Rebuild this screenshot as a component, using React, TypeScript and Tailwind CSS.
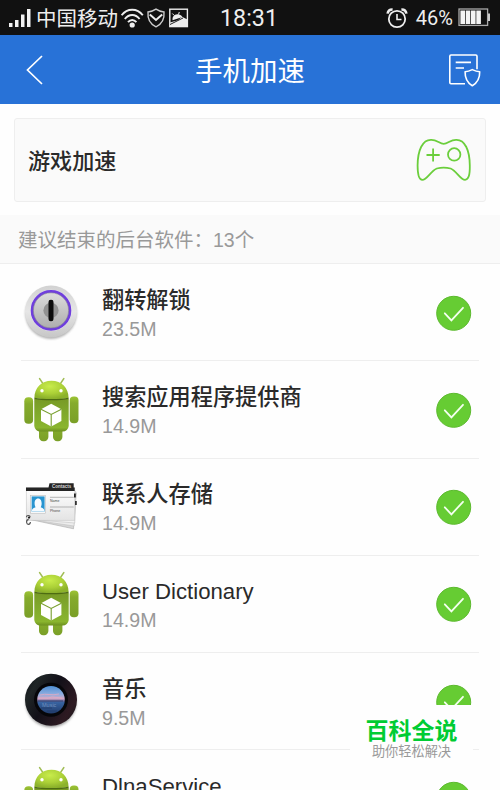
import React from 'react';

type IconName = 'lock' | 'android' | 'contacts' | 'music';

interface AppItem {
  name: string;
  size?: string;
  icon: IconName;
}

const apps: AppItem[] = [
  { name: '翻转解锁', size: '23.5M', icon: 'lock' },
  { name: '搜索应用程序提供商', size: '14.9M', icon: 'android' },
  { name: '联系人存储', size: '14.9M', icon: 'contacts' },
  { name: 'User Dictionary', size: '14.9M', icon: 'android' },
  { name: '音乐', size: '9.5M', icon: 'music' },
  { name: 'DlnaService', icon: 'android' },
];

const LockIcon = () => (
  <svg width="60" height="68" viewBox="0 0 60 68">
    <defs>
      <linearGradient id="lockRim" x1="0" y1="0" x2="0" y2="1">
        <stop offset="0" stopColor="#d2d2d2" />
        <stop offset="0.5" stopColor="#e6e6e6" />
        <stop offset="1" stopColor="#c6c6c6" />
      </linearGradient>
      <linearGradient id="lockFace" x1="0" y1="0" x2="0" y2="1">
        <stop offset="0" stopColor="#dedede" />
        <stop offset="1" stopColor="#acacac" />
      </linearGradient>
      <filter id="lockShadow" x="-20%" y="-20%" width="140%" height="140%">
        <feGaussianBlur stdDeviation="1" />
      </filter>
    </defs>
    <circle cx="29" cy="34.3" r="25.7" fill="#8a8a8a" opacity="0.65" filter="url(#lockShadow)" />
    <circle cx="29" cy="32.6" r="26" fill="url(#lockRim)" />
    <circle cx="29" cy="31.4" r="20.6" fill="#e9e4f5" />
    <circle cx="29" cy="31.4" r="19" fill="url(#lockFace)" stroke="#6f3fdc" strokeWidth="2.6" />
    <circle cx="29" cy="31.4" r="17.6" fill="none" stroke="#7c788a" strokeWidth="0.5" />
    <circle cx="29" cy="31.4" r="7.6" fill="#929292" />
    <rect x="26.5" y="20.7" width="5" height="21.6" rx="2.3" fill="#0c0c0c" />
  </svg>
);

const AndroidIcon = () => (
  <svg width="60" height="68" viewBox="0 0 60 68">
    <defs>
      <linearGradient id="droidBody" x1="0" y1="0" x2="0" y2="1">
        <stop offset="0" stopColor="#789a26" />
        <stop offset="0.4" stopColor="#7fa82b" />
        <stop offset="0.88" stopColor="#8ab52e" />
        <stop offset="1" stopColor="#6c8f20" />
      </linearGradient>
      <radialGradient id="droidHead" cx="0.45" cy="0.3" r="0.65">
        <stop offset="0" stopColor="#c8ec4b" />
        <stop offset="0.6" stopColor="#abd037" />
        <stop offset="1" stopColor="#8cb22b" />
      </radialGradient>
      <linearGradient id="droidLimb" x1="0" y1="0" x2="0" y2="1">
        <stop offset="0" stopColor="#9cc334" />
        <stop offset="0.25" stopColor="#85ab2c" />
        <stop offset="1" stopColor="#7a9f27" />
      </linearGradient>
    </defs>
    <path d="M17.6 2.6 20.8 7.4M41.8 2.6 38.6 7.4" stroke="#a0bd55" strokeWidth="1.6" strokeLinecap="round" />
    <rect x="17" y="48" width="9.4" height="17.2" rx="4.2" fill="url(#droidLimb)" />
    <rect x="31" y="48" width="9.4" height="17.2" rx="4.2" fill="url(#droidLimb)" />
    <rect x="2.3" y="21.3" width="8.8" height="26.4" rx="4" fill="url(#droidLimb)" />
    <rect x="47.7" y="20.6" width="8.8" height="26.6" rx="4" fill="url(#droidLimb)" />
    <path d="M12.3 23h34.4v27a6 6 0 0 1-6 5.5H18.3a6 6 0 0 1-6-5.5z" fill="url(#droidBody)" />
    <path d="M12.4 22C12.4 12 19.5 4.8 29.5 4.8S46.6 12 46.6 22c-8 1.7-26 1.7-34.2 0z" fill="url(#droidHead)" />
    <path d="M12.4 22.4c8 1.7 26 1.7 34.2 0" fill="none" stroke="#4d6b12" strokeWidth="1.2" />
    <circle cx="20" cy="14.8" r="1.7" fill="#fff" />
    <circle cx="39" cy="14.8" r="1.7" fill="#fff" />
    <path d="M29.2 27.7 39.4 33.3v11.6L29.2 50.4 19 44.9V33.3z" fill="#fff" />
    <path d="M19 33.3l10.2 5.2 10.2-5.2M29.2 38.5v11.9" fill="none" stroke="#789f2e" strokeWidth="1.1" />
  </svg>
);

const ContactsIcon = () => (
  <svg width="60" height="68" viewBox="0 0 60 68">
    <defs>
      <linearGradient id="cardFace" x1="0" y1="0" x2="0" y2="1">
        <stop offset="0" stopColor="#ffffff" />
        <stop offset="1" stopColor="#e4e4e4" />
      </linearGradient>
    </defs>
    <path d="M6 46 51.5 55.8 54.2 20 50 18z" fill="#d6d6d6" stroke="#aaa" strokeWidth="0.6" />
    <path d="M5 46 52 53 54 19z" fill="#ededed" stroke="#bbb" strokeWidth="0.5" />
    <path d="M4.5 46 52.8 50 53.6 18z" fill="#f3f3f3" stroke="#bbb" strokeWidth="0.5" />
    <rect x="4.2" y="15" width="48.6" height="32.2" fill="url(#cardFace)" stroke="#bcbcbc" strokeWidth="0.5" />
    <path d="M4 18v-3.5h22.5l1-4.2h24.2v4.2h1V18z" fill="#252525" />
    <rect x="52" y="20.5" width="1.8" height="4" fill="#222" />
    <rect x="53" y="28" width="1.8" height="4" fill="#333" />
    <text x="30" y="15.3" fontSize="4.5" fontWeight="bold" fill="#d8d8d8" fontFamily="Liberation Sans, sans-serif">
      Contacts
    </text>
    <rect x="8.6" y="22.4" width="15" height="17.8" fill="#fff" stroke="#b9b9b9" strokeWidth="0.6" />
    <rect x="9.6" y="23.4" width="13" height="15.2" fill="#2794d0" />
    <path d="M9.8 38.6c0-2.6 1.5-3.6 3.8-4.3-1.4-1.9-1.9-8.9 2.5-8.9s4 7 2.6 8.9c2.3.7 3.7 1.7 3.7 4.3z" fill="#f5fbff" />
    <path d="M28 24.3h23.8M28 34h23.8" stroke="#999" strokeWidth="0.7" />
    <text x="28" y="29.4" fontSize="3.5" fill="#444" fontFamily="Liberation Sans, sans-serif">
      Name
    </text>
    <text x="28" y="39" fontSize="3.5" fill="#444" fontFamily="Liberation Sans, sans-serif">
      Phone
    </text>
    <path d="M4.4 44.2c0-2.2 3.8-2.2 3.8 0M8.4 49c-.2 3.2-3.6 3-3.8.2-.1-1.6.8-2.6 2-2.8" fill="none" stroke="#4c4c4c" strokeWidth="1.1" />
    <circle cx="7" cy="44.6" r="1.1" fill="#222" />
  </svg>
);

const MusicIcon = () => (
  <svg width="60" height="68" viewBox="0 0 60 68">
    <defs>
      <linearGradient id="disc" x1="0" y1="0.2" x2="1" y2="0.8">
        <stop offset="0" stopColor="#101318" />
        <stop offset="0.15" stopColor="#1f2526" />
        <stop offset="0.45" stopColor="#121018" />
        <stop offset="0.85" stopColor="#2e1a22" />
        <stop offset="1" stopColor="#1d181d" />
      </linearGradient>
      <linearGradient id="sunset" x1="0" y1="0" x2="0" y2="1">
        <stop offset="0" stopColor="#4e8fd4" />
        <stop offset="0.3" stopColor="#8daddf" />
        <stop offset="0.46" stopColor="#d2a7c4" />
        <stop offset="0.54" stopColor="#6a6699" />
        <stop offset="0.6" stopColor="#3762a0" />
        <stop offset="1" stopColor="#203c6c" />
      </linearGradient>
      <filter id="discShadow" x="-20%" y="-20%" width="140%" height="140%">
        <feGaussianBlur stdDeviation="1.4" />
      </filter>
    </defs>
    <circle cx="29" cy="34" r="25" fill="#555" opacity="0.7" filter="url(#discShadow)" />
    <circle cx="29" cy="31.8" r="26" fill="url(#disc)" />
    <circle cx="29" cy="31.8" r="17" fill="#060609" />
    <circle cx="29" cy="31.8" r="13.8" fill="url(#sunset)" />
    <path d="M18 27c6-2 12 1 19-1M17 30h9l4-1 10 1" stroke="#e4a9c0" strokeWidth="0.8" fill="none" />
    <path d="M16 33h25M19 40h11M25 43h10" stroke="#223a68" strokeWidth="0.8" />
    <text x="20" y="38.5" fontSize="5.5" fill="#6f8fbd" fontFamily="Liberation Sans, sans-serif">
      Music
    </text>
  </svg>
);

const icons: Record<IconName, React.FC> = {
  lock: LockIcon,
  android: AndroidIcon,
  contacts: ContactsIcon,
  music: MusicIcon,
};

const CheckIcon = () => (
  <svg width="36" height="36" viewBox="0 0 36 36">
    <circle cx="17.7" cy="18.3" r="17" fill="#66cc33" stroke="#5dba2f" strokeWidth="1" />
    <path d="M8.8 18.3 15.4 25.4 27 12.8" fill="none" stroke="#f4fff0" strokeWidth="1.8" strokeLinecap="round" />
  </svg>
);

const StatusBar = () => (
  <div className="flex h-[35px] shrink-0 items-center bg-[#111] text-[#eee]">
    <svg className="ml-[9px]" width="23" height="20" viewBox="0 0 23 20" fill="#f2f2f2">
      <rect x="0" y="15" width="3.5" height="4" />
      <rect x="6" y="12" width="3.5" height="7" />
      <rect x="12" y="6.5" width="3.5" height="12.5" />
      <rect x="18" y="1" width="3.5" height="18" />
    </svg>
    <span className="ml-[4px] w-[84px] pt-[2px] text-[20.5px] leading-[34px] whitespace-nowrap">中国移动</span>
    <svg width="74" height="22" viewBox="0 0 74 22" fill="none" stroke="#eee">
      {/* wifi */}
      <path d="M1.6 8.3C7.2.9 17.2.9 22.8 8.3M4.8 12c4.2-5.3 10.6-5.3 14.8 0M8 15.2c2.5-3 5.9-3 8.4 0" strokeWidth="1.9" />
      <circle cx="12.2" cy="18" r="2.6" fill="#eee" stroke="none" />
      {/* shield */}
      <path d="M36 2.2c-2.6 1.8-5 2.6-8 2.8-.6 7 2.4 12.2 8 14.8 5.6-2.6 8.6-7.8 8-14.8-3-.2-5.4-1-8-2.8z" strokeWidth="1.4" stroke="#ccc" />
      <path d="M29.8 7.5 36 13l6.2-5.5" strokeWidth="2" />
      {/* picture */}
      <rect x="49.8" y="2.2" width="17.6" height="17.4" strokeWidth="1.4" />
      <path d="M50 19.5v-4l8-2.3 4-3.4 5.4 2.6v7.1z" fill="#eee" stroke="none" />
      <path d="M52.6 13.2c-.6-3.6 1.8-5.8 4.6-6 2.3-.1 4 .8 5.2 2.7z" fill="#eee" stroke="none" />
      <path d="M52.3 6.5l2 2M59.3 5l-.8 2.5" strokeWidth="1" />
      <path d="M50 17.5 63 11" strokeWidth="1" stroke="#222" />
    </svg>
    <span className="ml-[26px] font-['Roboto',sans-serif] text-[23.3px] leading-[34px]">18:31</span>
    <svg className="ml-auto" width="22" height="22" viewBox="0 0 22 22" fill="none" stroke="#eee" strokeWidth="1.8">
      <circle cx="11" cy="12" r="8.2" />
      <path d="M11 7v5.5h4.5" strokeWidth="1.6" />
      <path d="M1.6 6.6C2 4 4 2.4 6.6 2.5M20.4 6.6C20 4 18 2.4 15.4 2.5" strokeWidth="2.6" />
    </svg>
    <span className="ml-[8px] font-['Roboto',sans-serif] text-[20px] leading-[34px]">46%</span>
    <svg className="mr-[9px] ml-[5px]" width="33" height="19" viewBox="0 0 33 19">
      <rect x="1" y="1" width="28.6" height="16.4" fill="none" stroke="#aaa" strokeWidth="1.3" />
      <rect x="30" y="5.5" width="2" height="7.5" fill="#ccc" />
      <path d="M2.4 2.4h4.6v13.6H2.4zM7.7 2.4h4.6v13.6H7.7zM13 2.4h4.6v13.6H13zM18.3 2.4h4.6v13.6h-4.6z" fill="#f4f4f4" />
    </svg>
  </div>
);

const Header = () => (
  <header className="grid h-[69px] shrink-0 grid-cols-[60px_1fr_60px] items-center bg-[#2872d7] text-white">
    <svg className="ml-[24px]" width="36" height="34" viewBox="0 0 36 34" fill="none" stroke="#fff" strokeWidth="1.7">
      <path d="M18 3 3.5 17 18 31" />
    </svg>
    <h1 className="pt-[4px] text-center text-[27.5px] leading-none">手机加速</h1>
    <svg className="ml-[8px]" width="36" height="36" viewBox="0 0 36 36" fill="none" stroke="#fff" strokeWidth="1.6" strokeLinejoin="round">
      <path d="M17 31.7H3a1.2 1.2 0 0 1-1.2-1.2V4.2A1.2 1.2 0 0 1 3 3h24.8a1.2 1.2 0 0 1 1.2 1.2v13" />
      <path d="M7.7 10.4H23M7.7 16H16" />
      <path d="M24.3 17.6c-2.6 1.3-4.5 2-7.2 2.2-.2 6.4 2.4 11.1 7.2 14 4.8-2.9 7.6-7.6 7.4-14-2.8-.2-4.8-.9-7.4-2.2z" />
    </svg>
  </header>
);

const GameCard = () => (
  <div className="mx-[14px] mt-[14px] flex h-[84px] shrink-0 items-center justify-between rounded-[3px] border border-[#eee] bg-[#fafafa] pr-[13px] pl-[13px]">
    <span className="pt-[4px] text-[22.1px] leading-none font-medium text-[#2a2a2a]">游戏加速</span>
    <svg width="56" height="44" viewBox="0 0 56 44" fill="none" stroke="#6bce3c" strokeWidth="1.8">
      <path d="M27.7 5.8C23.5 5.8 20.8 1.5 15 1.8 6.7 1.6 1.7 12 1.6 27.5c0 9.8 1.4 14.3 4.7 14.3 4.9 0 8-8.5 14.5-11.3 4-1.1 9.8-1.1 13.8 0 6.5 2.8 9.6 11.3 14.5 11.3 3.3 0 4.9-4.5 4.7-14.3C53.7 12 48.7 1.6 40.4 1.8c-5.8-.3-8.5 4-12.7 4z" />
      <path d="M10.5 17h13.2M17.1 10.4v13.2" />
      <circle cx="38.2" cy="16.4" r="6.2" />
    </svg>
  </div>
);

const AppRow: React.FC<{ app: AppItem }> = ({ app }) => {
  const Icon = icons[app.icon];
  return (
    <li className="mx-[21px] flex h-[97.25px] shrink-0 items-center border-b border-[#eee] pt-px pr-[7px] pl-px">
      <Icon />
      <div className="ml-[20px] flex-1 pt-[3px] whitespace-nowrap">
        <div className="text-[22.2px] leading-[31px] font-medium text-[#2a2a2a]">{app.name}</div>
        <div className="h-[28px] text-[19.6px] leading-[26px] text-[#999]">{app.size}</div>
      </div>
      <CheckIcon />
    </li>
  );
};

export default function App() {
  return (
    <div className="relative flex h-[790px] w-[500px] flex-col overflow-hidden bg-[#fefefe] font-['Liberation_Sans','Noto_Sans_CJK_SC',sans-serif]">
      <StatusBar />
      <Header />
      <GameCard />
      <div className="mt-[13px] flex h-[49px] shrink-0 items-center border-b border-[#eee] bg-[#fafafa] pt-[3px] pl-[18px] text-[19.5px] text-[#999]">
        建议结束的后台软件：13个
      </div>
      <ul className="flex flex-col">
        {apps.map((app) => (
          <AppRow key={app.name} app={app} />
        ))}
      </ul>
      <div className="absolute top-[705px] left-[350px] flex h-[62px] w-[123px] flex-col items-center bg-[#fefefe] pt-[13px]">
        <span className="text-[23px] leading-[26px] font-bold text-[#00cc33]">百科全说</span>
        <span className="text-[13.2px] leading-[16px] text-[#999]">助你轻松解决</span>
      </div>
    </div>
  );
}
